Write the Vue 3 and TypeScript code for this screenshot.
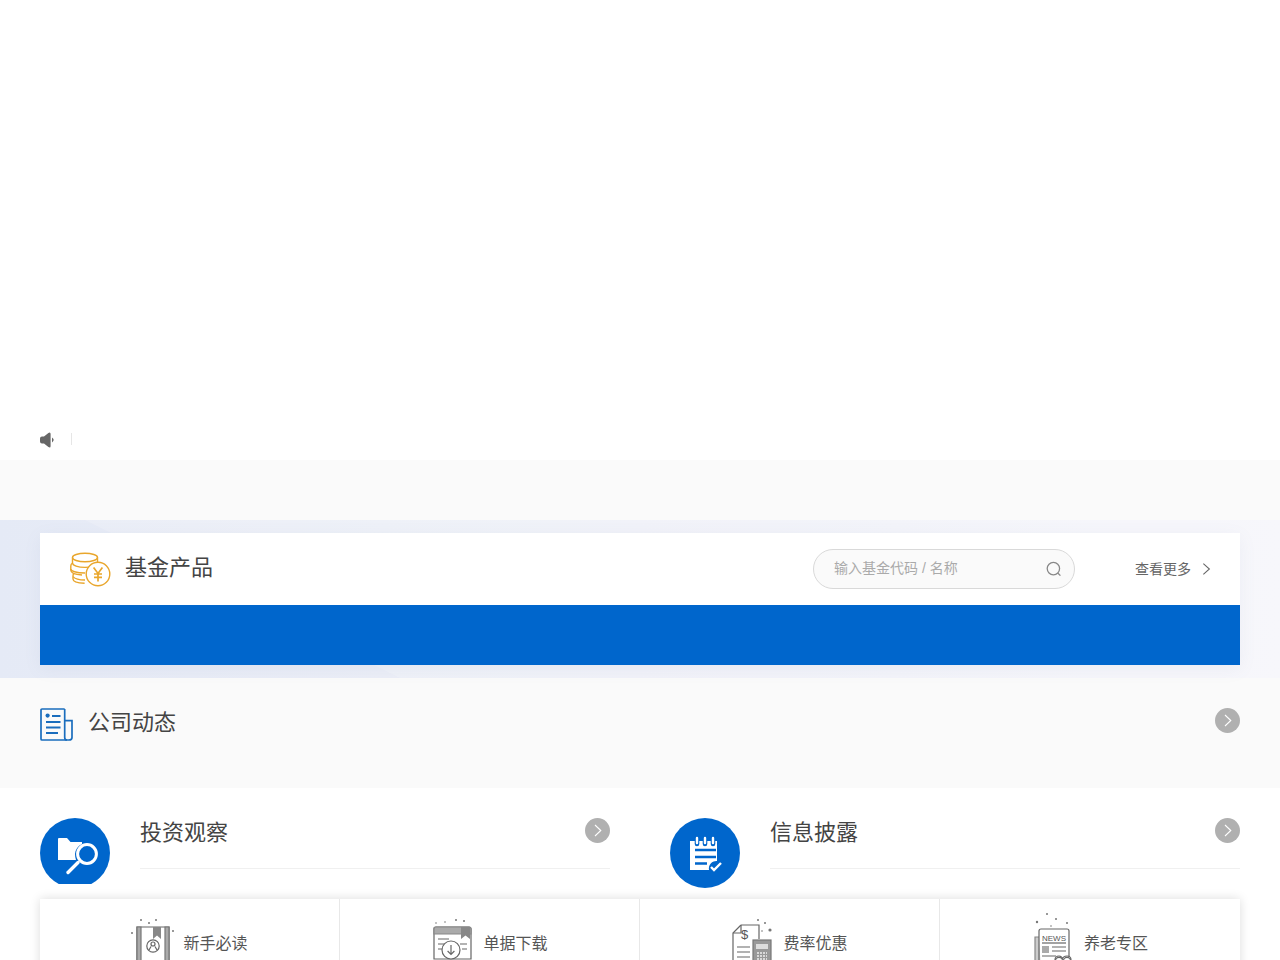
<template>
  <div class="page">
    <div class="banner"></div>

    <div class="notice">
      <svg class="notice-icon" width="16" height="16" viewBox="0 0 16 16">
        <path d="M0 6.5 Q0 4.6 2 4.6 H4 L8.4 .9 Q10.6 -.4 10.6 2 V14 Q10.6 16.4 8.4 15.1 L4 11.4 H2 Q0 11.4 0 9.5 Z" fill="#666" />
        <path d="M12 5.6 Q15.4 8 12 10.4 Z" fill="#666" />
      </svg>
      <span class="notice-line"></span>
    </div>

    <div class="gap-band"></div>

    <section class="fund-band">
      <div class="fund-card">
        <div class="fund-head">
          <svg class="coin-icon" width="42" height="36" viewBox="0 0 42 36" fill="none" stroke="#e9a62c" stroke-width="1.4">
            <ellipse cx="15" cy="5.5" rx="12.5" ry="4.2" />
            <path d="M2.5 5.5 V11 C2.5 13.5 8 15.4 15 15.4 C21 15.4 26 14 27.5 11.5 V5.5" />
            <path d="M2.5 11 C1 12 .8 13 .8 14 V18 C.8 20.6 5 22.6 12 23" />
            <path d="M.8 17 C.8 19 6 21 15 21" />
            <path d="M4 21.4 C3.2 22 3 23 3 24 V27 C3 29.4 8 31 14.6 31.2" />
            <path d="M3 24.6 C5 27 10 28 15 28" />
            <circle cx="28" cy="22" r="11.8" fill="#fff" />
            <path d="M23.6 15.6 L28 21.4 L32.4 15.6 M24 22 H32 M24 25.4 H32 M28 21.4 V29.4" stroke-width="1.7" />
          </svg>
          <h2 class="fund-title">基金产品</h2>
          <div class="search">
            <span class="search-hint">输入基金代码 / 名称</span>
            <svg width="16" height="16" viewBox="0 0 16 16" fill="none" stroke="#888" stroke-width="1.3">
              <circle cx="7.4" cy="7.6" r="6.2" />
              <path d="M12 12.2 L14.4 14.6" />
            </svg>
          </div>
          <a class="more">
            <span class="more-text">查看更多</span>
            <svg width="10" height="14" viewBox="0 0 10 14" fill="none" stroke="#666" stroke-width="1.2">
              <path d="M1.5 1 L8.2 7 L1.5 13" />
            </svg>
          </a>
        </div>
        <div class="fund-bar"></div>
      </div>
    </section>

    <section class="news-band">
      <div class="news-left">
        <svg width="33" height="33" viewBox="0 0 33 33" fill="none" stroke="#1a6dbd" stroke-width="1.7">
          <path d="M24.7 1 H2 Q1 1 1 2 V31 Q1 32 2 32 H29 Q32 32 32 29.5 V12.6 H25" />
          <path d="M24.7 1 V29.5 Q24.7 32 27 32" />
          <circle cx="7.6" cy="7.6" r="2.1" fill="#1a6dbd" stroke="none" />
          <path d="M12 8 H20.5 M6 14 H20.5 M6 19.5 H20.5 M6 25 H18" stroke-width="2" />
        </svg>
        <h2 class="section-title lifted">公司动态</h2>
      </div>
      <span class="arrow-dot">
        <svg width="8" height="13" viewBox="0 0 8 13" fill="none" stroke="#fff" stroke-width="1.1"><path d="M1 1 L6.8 6.5 L1 12" /></svg>
      </span>
    </section>

    <section class="info-band">
      <div class="info-row">
        <div class="info-col">
          <div class="round-clip">
            <span class="round">
              <svg width="50" height="50" viewBox="0 0 50 50">
                <path d="M8 11 Q8 10 9 10 H17 L20.5 14 H32 V16 A12.5 12.5 0 0 0 25 26 Q25 29 26 32 H8 Z" fill="#fff" />
                <circle cx="37" cy="26" r="9.4" fill="none" stroke="#fff" stroke-width="3" />
                <path d="M28 34.5 L18 44.5" stroke="#fff" stroke-width="3.4" stroke-linecap="round" />
              </svg>
            </span>
          </div>
          <div class="info-head">
            <h2 class="section-title">投资观察</h2>
            <span class="arrow-dot">
              <svg width="8" height="13" viewBox="0 0 8 13" fill="none" stroke="#fff" stroke-width="1.1"><path d="M1 1 L6.8 6.5 L1 12" /></svg>
            </span>
          </div>
        </div>
        <div class="info-col">
          <span class="round">
            <svg width="50" height="50" viewBox="0 0 50 50">
              <path d="M10 13 H37 V33 A7.5 7.5 0 0 0 29 42 H10 Z" fill="#fff" />
              <path d="M17 10 V16 M25 10 V16 M33 10 V16" stroke="#0066cc" stroke-width="4.6" stroke-linecap="round" />
              <path d="M17 10 V15 M25 10 V15 M33 10 V15" stroke="#fff" stroke-width="2.4" stroke-linecap="round" />
              <path d="M15 22 H36 M15 29 H36 M15 35.5 H27" stroke="#0066cc" stroke-width="2.6" />
              <path d="M31 39 L34 42 L41 35" fill="none" stroke="#fff" stroke-width="2.4" />
            </svg>
          </span>
          <div class="info-head">
            <h2 class="section-title">信息披露</h2>
            <span class="arrow-dot">
              <svg width="8" height="13" viewBox="0 0 8 13" fill="none" stroke="#fff" stroke-width="1.1"><path d="M1 1 L6.8 6.5 L1 12" /></svg>
            </span>
          </div>
        </div>
      </div>

      <div class="tools">
        <div class="tool">
          <svg width="44" height="50" viewBox="0 0 44 50" fill="none" stroke="#666" stroke-width="1.2">
            <path d="M6 8 H38 V50 H6 Z" />
            <path d="M6 8 H10 V50 H6 Z M34 8 H38 V50 H34 Z" fill="#aaa" stroke="#777" />
            <path d="M22 8 H30 V20 L26 16.5 L22 20 Z" fill="#888" stroke="none" />
            <circle cx="22" cy="27" r="6.2" />
            <circle cx="22" cy="25" r="2" />
            <path d="M18 31 L20 27.5 M26 31 L24 27.5" />
            <g fill="#777" stroke="none">
              <circle cx="10" cy="1" r="1" /><circle cx="18" cy="4" r="1" /><circle cx="25" cy="1" r="1" /><circle cx="1" cy="14" r="1" /><circle cx="42" cy="12" r="1" />
            </g>
          </svg>
          <span>新手必读</span>
        </div>
        <div class="tool">
          <svg width="44" height="50" viewBox="0 0 44 50" fill="none" stroke="#666" stroke-width="1.2">
            <path d="M3 10 Q3 8 5 8 H38 Q40 8 40 10 V40 H3 Z" />
            <path d="M3 10 Q3 8 5 8 H38 Q40 8 40 10 V15 H3 Z" fill="#aaa" stroke="#888" />
            <path d="M30 8 H39 V20 L34.5 16.5 L30 20 Z" fill="#888" stroke="none" />
            <path d="M7 20 H18 M7 25 H13 M7 30 H13 M29 25 H36 M31 30 H36" />
            <circle cx="20" cy="31" r="9" fill="#fff" />
            <path d="M20 26 V35 M16.6 32 L20 35.4 L23.4 32" />
            <g fill="#777" stroke="none">
              <circle cx="5" cy="4" r=".8" /><circle cx="14" cy="3" r=".8" /><circle cx="25" cy="1" r="1" /><circle cx="33" cy="2" r="1" />
            </g>
          </svg>
          <span>单据下载</span>
        </div>
        <div class="tool">
          <svg width="44" height="50" viewBox="0 0 44 50" fill="none" stroke="#666" stroke-width="1.2">
            <path d="M10 6 H28 V20 M10 6 L2 14 V50 H20" />
            <path d="M10 6 V14 H2" />
            <text x="10" y="20" class="dollar">$</text>
            <path d="M6 28 H19 M6 33 H19 M6 38 H19" />
            <rect x="22" y="21" width="18" height="29" fill="#999" stroke="#777" />
            <rect x="25" y="25" width="12" height="5" fill="#ddd" stroke="none" />
            <path d="M26 34 H36 M26 37 H36 M26 40 H36 M26 43 H36" stroke="#eee" stroke-dasharray="2 1" stroke-width="1.5" />
            <g fill="#777" stroke="none">
              <circle cx="27" cy="1" r="1" /><circle cx="34" cy="4" r="1" /><circle cx="39" cy="11" r="1.6" /><circle cx="31" cy="12" r=".8" />
            </g>
          </svg>
          <span>费率优惠</span>
        </div>
        <div class="tool">
          <svg width="44" height="50" viewBox="0 0 44 50" fill="none" stroke="#666" stroke-width="1.2">
            <path d="M7 18 H3 V52 H9" fill="#ccc" stroke="#888" />
            <path d="M7 48 V12 Q7 10 9 10 H35 Q37 10 37 12 V38" />
            <text x="10" y="22" class="news">NEWS</text>
            <path d="M10 24 H34" />
            <rect x="10" y="27" width="7" height="7" fill="#aaa" stroke="none" />
            <path d="M20 28 H34 M20 32 H34 M10 37 H24" />
            <path d="M23 41 Q23 37 27 37 Q30 37 30.5 40 Q31 37 35 37 Q39 37 39 41" />
            <circle cx="27" cy="42" r="3.6" fill="#fff" />
            <circle cx="35" cy="42" r="3.6" fill="#fff" />
            <g fill="#777" stroke="none">
              <circle cx="5" cy="3" r="1.2" /><circle cx="15" cy="-5" r="1" /><circle cx="24" cy="0" r="1" /><circle cx="35" cy="4" r="1" /><circle cx="19" cy="7" r=".8" />
            </g>
          </svg>
          <span>养老专区</span>
        </div>
      </div>
    </section>
  </div>
</template>

<script setup lang="ts">
</script>

<style>
html,
body {
  overflow: hidden;
}
</style>

<style scoped>
.page {
  font-family: "Liberation Sans", "Noto Sans CJK SC", sans-serif;
  color: #444;
  background: #fff;
}

.banner {
  height: 420px;
}

.notice {
  height: 40px;
  padding: 0 40px;
  display: flex;
  align-items: center;
  box-sizing: border-box;
}

.notice-icon {
  margin-top: -1px;
}

.notice-line {
  width: 1px;
  height: 12px;
  margin: -2px 0 0 15px;
  background: #e6e6e6;
}

.gap-band {
  height: 60px;
  background: #fafafa;
}

.fund-band {
  position: relative;
  height: 158px;
  padding: 13px 40px;
  box-sizing: border-box;
  background: linear-gradient(90deg, #e5eaf6 0%, #ebeef7 30%, #f1f2f9 70%, #f6f6fb 100%);
}

/* faint wedge in the backdrop */
.fund-band::before {
  content: "";
  position: absolute;
  inset: 0;
  background: rgba(255, 255, 255, 0.18);
  clip-path: polygon(85px 0, 100% 0, 100% 100%, 400px 100%);
}

.fund-card {
  position: relative;
  height: 132px;
  box-shadow: 0 4px 16px rgba(120, 130, 170, 0.08);
}

.fund-head {
  height: 72px;
  padding: 0 29px 0 30px;
  display: flex;
  align-items: center;
  background: #fff;
}

.coin-icon {
  margin-top: 1px;
}

.fund-title {
  flex: 1;
  margin: -2px 0 0 13px;
  font-size: 22px;
  font-weight: 400;
  line-height: 30px;
  color: #444;
}

.search {
  width: 262px;
  height: 40px;
  padding: 0 12px 0 20px;
  box-sizing: border-box;
  display: flex;
  align-items: center;
  justify-content: space-between;
  border: 1px solid #d9d9d9;
  border-radius: 20px;
  background: #fafafa;
}

.search-hint {
  font-size: 14px;
  color: #aaa;
  margin-top: -4px;
}

.more {
  margin-left: 60px;
  display: flex;
  align-items: center;
  gap: 11px;
  font-size: 14px;
  color: #666;
  width: 76px;
  white-space: nowrap;
}

.more-text {
  margin-top: -2px;
}

.fund-bar {
  height: 60px;
  background: #0066cc;
}

.news-band {
  height: 110px;
  padding: 30px 40px 0;
  box-sizing: border-box;
  display: flex;
  justify-content: space-between;
  align-items: flex-start;
  background: #fafafa;
}

.news-left {
  display: flex;
  align-items: center;
  gap: 15px;
}

.section-title {
  margin: 0;
  font-size: 22px;
  font-weight: 400;
  line-height: 30px;
  color: #444;
}

.section-title.lifted {
  margin: -3px 0 0;
}

.arrow-dot {
  width: 25px;
  height: 25px;
  border-radius: 50%;
  background: #b0b0b0;
  display: flex;
  align-items: center;
  justify-content: center;
  flex-shrink: 0;
}

.info-band {
  padding: 30px 40px 40px;
  background: #fff;
}

.info-row {
  display: grid;
  grid-template-columns: 570px 570px;
  column-gap: 60px;
}

.info-col {
  display: flex;
  gap: 30px;
  height: 70px;
}

.round-clip {
  height: 66px;
  overflow: hidden;
  flex-shrink: 0;
}

.round {
  width: 70px;
  height: 70px;
  border-radius: 50%;
  background: #0066cc;
  display: flex;
  align-items: center;
  justify-content: center;
  flex-shrink: 0;
}

.info-head {
  flex: 1;
  height: 50px;
  display: flex;
  justify-content: space-between;
  align-items: flex-start;
  border-bottom: 1px solid #f0f0f0;
}

.tools {
  margin-top: 11px;
  display: grid;
  grid-template-columns: repeat(4, 1fr);
  background: #fff;
  box-shadow: 0 0 10px rgba(0, 0, 0, 0.14);
}

.tool {
  height: 90px;
  padding-top: 20px;
  box-sizing: border-box;
  display: flex;
  justify-content: center;
  align-items: flex-start;
  gap: 8px;
  font-size: 16px;
  color: #555;
  border-right: 1px solid #e8e8e8;
}

.tool:last-child {
  border-right: none;
}

.tool svg {
  overflow: visible;
}

.tool span {
  margin-top: 15px;
  line-height: 20px;
}

.dollar {
  font-size: 13px;
  fill: #555;
  stroke: none;
  font-family: "Liberation Sans", sans-serif;
}

.news {
  font-size: 8px;
  fill: #555;
  stroke: none;
  font-family: "Liberation Sans", sans-serif;
}
</style>
